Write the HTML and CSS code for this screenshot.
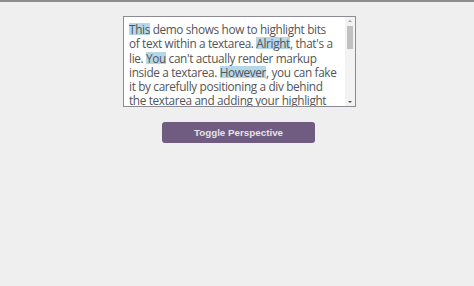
FILE: index.html
```html
<!DOCTYPE html>
<html>
<head>
<meta charset="utf-8">
<link rel="stylesheet" href="styles.css">
</head>
<body>
<div class="topbar"></div>
<main class="page">
  <div class="editor">
    <div class="text">
      <div class="line"><span class="hl">This</span> demo shows how to highlight bits</div>
      <div class="line">of text within a textarea. <span class="hl">Alright</span>, that's a</div>
      <div class="line">lie. <span class="hl">You</span> can't actually render markup</div>
      <div class="line">inside a textarea. <span class="hl">However</span>, you can fake</div>
      <div class="line">it by carefully positioning a div behind</div>
      <div class="line">the textarea and adding your highlight</div>
      <div class="line">markup there.</div>
    </div>
    <div class="scrollbar">
      <div class="arrow up"></div>
      <div class="track"><div class="thumb"></div></div>
      <div class="arrow down"></div>
    </div>
  </div>
  <button class="toggle">Toggle Perspective</button>
</main>
</body>
</html>
```
FILE: styles.css
```css
html, body {
  margin: 0;
  padding: 0;
  background: #efefef;
}
.topbar {
  height: 2px;
  background: #8c8c8c;
}
.page {
  display: flex;
  flex-direction: column;
  align-items: center;
  padding-top: 14px;
}
.editor {
  width: 231px;
  height: 89px;
  border: 1px solid #8e8a93;
  background: #fff;
  display: flex;
  overflow: hidden;
  margin-left: 5px;
}
.text {
  flex: 1;
  min-width: 0;
  padding: 5px 0 0 5px;
  font-family: "Open Sans", sans-serif;
  font-size: 11.8px;
  line-height: 14.3px;
  letter-spacing: -0.35px;
  color: #555;
  overflow: hidden;
}
.line {
  white-space: nowrap;
}
.hl {
  display: inline-block;
  line-height: 12px;
  background: #b5d7ea;
}
.scrollbar {
  width: 10px;
  display: flex;
  flex-direction: column;
  background: #f3f3f3;
}
.arrow {
  height: 9px;
  position: relative;
}
.arrow::after {
  content: "";
  position: absolute;
  left: 3px;
  border-left: 2px solid transparent;
  border-right: 2px solid transparent;
}
.arrow.up::after {
  top: 3px;
  border-bottom: 2px solid #a0a0a0;
}
.arrow.down::after {
  top: 4px;
  border-top: 2px solid #505050;
}
.track {
  flex: 1;
  padding: 0 2px;
}
.thumb {
  height: 23px;
  background: #c1c1c1;
}
.toggle {
  margin-top: 15px;
  width: 153px;
  height: 21px;
  border: none;
  border-radius: 3px;
  background: #6f5c80;
  color: #e6e2e9;
  font-family: "Liberation Sans", Arial, sans-serif;
  font-size: 9.8px;
  font-weight: bold;
  padding: 0;
  margin-left: 3px;
}
```
